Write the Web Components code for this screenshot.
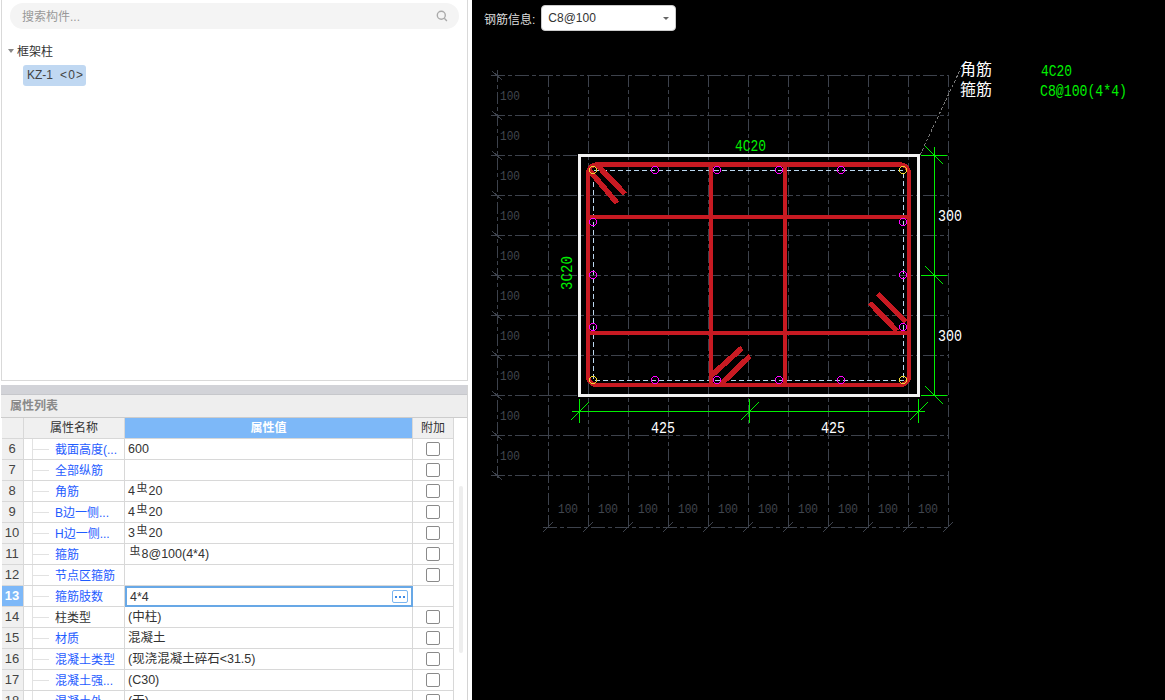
<!DOCTYPE html>
<html lang="zh"><head><meta charset="utf-8"><title>钢筋</title>
<style>
html,body{margin:0;padding:0;height:100%;overflow:hidden;background:#fff}
body{font:12px "Liberation Sans","Noto Sans CJK SC",sans-serif;color:#333}
</style></head>
<body>
<app-shell>
  <side-panel slot="side">
    <search-box placeholder="搜索构件..."></search-box>
    <comp-tree group="框架柱" item="KZ-1" count="&lt;0&gt;"></comp-tree>
    <prop-table slot="bottom" title="属性列表"></prop-table>
  </side-panel>
  <section-view slot="main" label="钢筋信息:" value="C8@100"></section-view>
</app-shell>
<script>
function def(name, css, html, init){
  customElements.define(name, class extends HTMLElement{
    constructor(){super();const s=this.attachShadow({mode:'open'});
      s.innerHTML='<style>'+css+'</style>'+(typeof html==='function'?html(this):html);}
    connectedCallback(){
      if(typeof this._r==='undefined'){this._r=1;
        this.shadowRoot.innerHTML=this.shadowRoot.innerHTML.replace(/\{\{(\w+)\}\}/g,(m,k)=>{
          const v=this.getAttribute(k)||'';return v.replace(/&/g,'&amp;').replace(/</g,'&lt;');});
        if(init)init(this,this.shadowRoot);}
    }
  });
}
def('app-shell',':host{display:flex;width:1165px;height:700px;overflow:hidden}.s{flex:0 0 472px;height:700px;overflow:hidden}.m{flex:1;height:700px;overflow:hidden}',
 '<div class="s"><slot name="side"></slot></div><div class="m"><slot name="main"></slot></div>');

def('side-panel',':host{display:flex;flex-direction:column;height:700px;width:472px;overflow:hidden}'+
 '.top{box-sizing:border-box;height:381px;width:467px;margin-left:1px;border:solid #d9d9d9;border-width:0 1px 1px 1px;flex:none}'+
 '.bot{flex:1;margin-top:4px;min-height:0}',
 '<div class="top"><slot></slot></div><div class="bot"><slot name="bottom"></slot></div>');

def('search-box',':host{display:flex;align-items:center;justify-content:space-between;box-sizing:border-box;height:26px;margin:3px 8px 0 8px;padding:0 11px 1px 12px;background:#f4f4f4;border-radius:13px;color:#999;font-size:12px}svg{display:block;margin-top:1px}',
 '<span>{{placeholder}}</span><svg width="12" height="12" viewBox="0 0 12 12" fill="none" stroke="#aaa" stroke-width="1.4"><circle cx="5.3" cy="5.3" r="4"/><path d="M8.3 8.3l2.6 2.6"/></svg>');

def('comp-tree',':host{display:block;padding:13px 0 0 5px}'+
 '.g{display:flex;align-items:center;height:17px;color:#333}.t{width:0;height:0;border:solid transparent;border-width:4px 3.5px 0;border-top-color:#888;margin:1px 3px 0 1px}'+
 '.i{display:flex;align-items:center;gap:7px;width:63px;box-sizing:border-box;height:21px;margin:6px 0 0 16px;padding:0 0 1px 4px;background:#c0d8f2;border-radius:3px;color:#444}.c{letter-spacing:1.2px}',
 '<div class="g"><i class="t"></i><span>{{group}}</span></div><div class="i"><span>{{item}}</span><span class="c">{{count}}</span></div>');

def('prop-table',':host{display:block;width:467px;margin-left:1px;height:315px;overflow:hidden;position:relative;box-sizing:border-box;border-right:1px solid #d4d4d4}'+
 '.sp{height:9px;background:#d2d3d8;border:solid #c6c7cb;border-width:0 0 1px}'+
 '.ti{box-sizing:border-box;height:23px;background:#eee;border-bottom:1px solid #ccc;padding:3px 0 0 9px;line-height:17px;color:#8a8a8a;font-weight:bold}'+
 '.tb{margin-left:1px;width:452px}'+
 '.sb{position:absolute;left:458px;top:101px;width:4px;height:167px;background:#eee;border-radius:2px}',
 '<div class="sp"></div><div class="ti">{{title}}</div><div class="tb"><prop-row head name="属性名称" val="属性值" extra="附加"></prop-row><slot></slot><div id="rows"></div></div><div class="sb"></div>',
 (el,root)=>{
  const R=[[6,'截面高度(...','600',1],[7,'全部纵筋','',1],[8,'角筋','4|20',1],[9,'B边一侧...','4|20',1],[10,'H边一侧...','3|20',1],[11,'箍筋','|8@100(4*4)',1],[12,'节点区箍筋','',1],[13,'箍筋肢数','4*4',1,1],[14,'柱类型','(中柱)',0],[15,'材质','混凝土',1],[16,'混凝土类型','(现浇混凝土碎石<31.5)',1],[17,'混凝土强...','(C30)',1],[18,'混凝土外...','(无)',1]];
  const c=root.getElementById('rows');
  R.forEach(r=>{const e=document.createElement('prop-row');e.setAttribute('n',r[0]);e.setAttribute('name',r[1]);e.setAttribute('val',r[2]);if(r[3])e.setAttribute('link','');if(r[4])e.setAttribute('active','');c.appendChild(e);});
 });

def('prop-row',':host{display:grid;grid-template-columns:22px 101px 288px 41px;height:21px;box-sizing:border-box;line-height:20px;color:#333}'+
 '.c{box-sizing:border-box;height:21px;border:solid #d8d8d8;border-width:0 1px 1px 0;overflow:hidden;white-space:nowrap}'+
 '.n{background:#f0f0f0;text-align:center;color:#444;font-size:13px;padding-right:1px}'+
 '.nm{position:relative;padding-left:31px;padding-top:1px;color:#333}.nm.l{color:#1f5cff}'+
 '.nm i{position:absolute;left:8px;top:0;bottom:-1px;border-left:1px solid #e2e2e2}.nm b{position:absolute;left:9px;top:10px;width:16px;border-top:1px solid #e2e2e2}'+
 '.v{padding-left:3px;position:relative;font-size:12.5px}'+
 '.r{font-size:11px;position:relative;top:-3px;margin:0 1px 0 1.5px}'+
 '.x{display:flex;align-items:center;justify-content:center}'+
 '.cb{box-sizing:border-box;width:14px;height:14px;border:1.4px solid #8a8a8a;border-radius:2px;margin-top:-1px;background:#fff}'+
 '.hn{background:#f0f0f0;text-align:center;line-height:21px}.hv{background:#7db8f8;color:#fff;font-weight:bold;text-align:center;line-height:21px;padding:0;font-size:12px}.hx{background:#f0f0f0;text-align:center;line-height:21px}'+
 '.actn{background:#7db8f8;color:#fff;font-weight:bold}'+
 '.act{border:2px solid #68a8e6;padding-left:3px;line-height:18px}'+
 '.dots{position:absolute;right:3px;top:2px;box-sizing:border-box;width:16px;height:13px;border:1px solid #7ab5f0;border-radius:2px;display:flex;align-items:center;justify-content:center;gap:2px}.dots u{width:2px;height:2px;background:#3d8ae6;display:block}',
 (el)=>{
  if(el.hasAttribute('head')) return '<div class="c hn"></div>'+'<div class="c hn">'+el.getAttribute('name')+'</div><div class="c hv">'+el.getAttribute('val')+'</div><div class="c hx">'+el.getAttribute('extra')+'</div>';
  const a=el.hasAttribute('active');
  const v=(el.getAttribute('val')||'').replace(/</g,'&lt;').replace('|','<span class="r">虫</span>');
  return '<div class="c n'+(a?' actn':'')+'">'+el.getAttribute('n')+'</div>'+
   '<div class="c nm'+(el.hasAttribute('link')?' l':'')+'"><i></i><b></b>'+el.getAttribute('name')+'</div>'+
   '<div class="c v'+(a?' act':'')+'">'+v+(a?'<span class="dots"><u></u><u></u><u></u></span>':'')+'</div>'+
   '<div class="c x">'+(a?'':'<span class="cb"></span>')+'</div>';
 });

def('section-view',':host{display:block;height:700px;background:#000;color:#ddd}'+
 '.bar{display:flex;align-items:center;height:36px;box-sizing:border-box;padding:0 0 0 12px;gap:6px}'+
 '.sel{box-sizing:border-box;width:135px;height:26px;background:#fff;border:1px solid #ccc;border-radius:4px;display:flex;align-items:center;justify-content:space-between;padding:0 6px 0 6px;color:#333}'+
 '.sel i{width:0;height:0;border:solid transparent;border-width:3.5px 3px 0;border-top-color:#666}'+
 'svg{display:block}'+
 'text{font-family:"Liberation Mono","Noto Sans CJK SC",monospace}',
 '<div class="bar"><span>{{label}}</span><div class="sel"><span>{{value}}</span><i></i></div></div><svg id="d" width="693" height="664" viewBox="472 36 693 664" shape-rendering="crispEdges"></svg>',
 (el,root)=>{
  let s='';
  const G='#3d424c';
  const ln=(a,b,c,d,st,w,ex)=>`<line x1="${a}" y1="${b}" x2="${c}" y2="${d}" stroke="${st}" stroke-width="${w||1}" ${ex||''}/>`;
  for(let y=75;y<=475;y+=40){s+=ln(491,y+.5,948,y+.5,G,1,'stroke-dasharray="14 3 4 3"');}
  for(let x=548;x<=948;x+=40){s+=ln(x+.5,75,x+.5,530,G,1,'stroke-dasharray="12 3 4 3"');}
  s+=ln(497.5,70,497.5,480,G,1,'stroke-dasharray="12 3 4 3"');
  s+=ln(543,527.5,950,527.5,G,1,'stroke-dasharray="14 3 4 3"');
  for(let y=75;y<=475;y+=40){s+=ln(492,y-4,502,y+5,G);}
  for(let x=548;x<=948;x+=40){s+=ln(x-5,532,x+5,522,G);}
  const T=(x,y,t,c,fs,len,ex)=>`<text x="${x}" y="${y}" fill="${c}" font-size="${fs||13}" ${len?`textLength="${len}" lengthAdjust="spacingAndGlyphs"`:''} ${ex||''}>${t}</text>`;
  for(let i=0;i<10;i++){
    s+=T(500,100+40*i,'100','#41464f',13,20);
    s+=T(558+40*i,513,'100','#41464f',13,20);
  }
  s+=ln(920,155,961,68,'#777',1,'stroke-dasharray="3 2"');
  s+=`<rect x="579.5" y="155.5" width="339" height="240" fill="none" stroke="#f2f2f2" stroke-width="3"/>`;
  s+=`<rect x="593.5" y="170.5" width="310" height="210" fill="none" stroke="#bcd8f0" stroke-width="1" stroke-dasharray="5 3"/>`;
  const Rd='#c81a22';
  s+=`<rect x="588" y="164.5" width="321" height="220.5" rx="9" fill="none" stroke="${Rd}" stroke-width="4.4"/>`;
  s+=ln(711,165,711,385,Rd,4)+ln(785,165,785,385,Rd,4)+ln(588,216.5,909,216.5,Rd,4)+ln(588,332.5,909,332.5,Rd,4);
  const H=5.4;
  s+=ln(589,170,617,203,Rd,H)+ln(597,165,625,194,Rd,H);
  s+=ln(712,375,742,348,Rd,H)+ln(720,385,750,356,Rd,H);
  s+=ln(897,331,870,303,Rd,H)+ln(906,322,878,294,Rd,H);
  const Y='#f0d830',P='#ff00ff';
  const dot=(x,y,c)=>`<circle cx="${x}" cy="${y}" r="3.5" fill="none" stroke="${c}" stroke-width="1"/>`;
  [655,717,779,841].forEach(x=>{s+=dot(x,170,P)+dot(x,380,P)});
  [222,275,327].forEach(y=>{s+=dot(593,y,P)+dot(903,y,P)});
  [[593,170],[903,170],[593,380],[903,380]].forEach(p=>s+=dot(p[0],p[1],Y));
  const Gn='#00f000';
  s+=ln(934.5,147,934.5,395,Gn,1);
  [155,275,395].forEach(y=>{s+=ln(921,y+.5,947,y+.5,Gn,1)+ln(925,y-9,943,y+9,Gn,1)});
  s+=ln(572,411.5,925,411.5,Gn,1);
  [579,749,918].forEach(x=>{s+=ln(x+.5,399,x+.5,423,Gn,1)+ln(x-8,420,x+10,402,Gn,1)});
  s+=T(735,150.5,'4C20',Gn,16,31);
  s+=T(572,290,'3C20',Gn,16,34,'transform="rotate(-90 572 290)"');
  s+=T(938,221,'300','#fff',16.5,24)+T(938,341,'300','#fff',16.5,24);
  s+=T(651,432.5,'425','#fff',16.5,24)+T(821,432.5,'425','#fff',16.5,24);
  s+=T(960,75,'角筋','#fff',16)+T(960,95,'箍筋','#fff',16);
  s+=T(1041,76,'4C20',Gn,16.5,31)+T(1040,96,'C8@100(4*4)',Gn,16.5,87);
  root.getElementById('d').innerHTML=s;
 });
</script>
</body></html>
